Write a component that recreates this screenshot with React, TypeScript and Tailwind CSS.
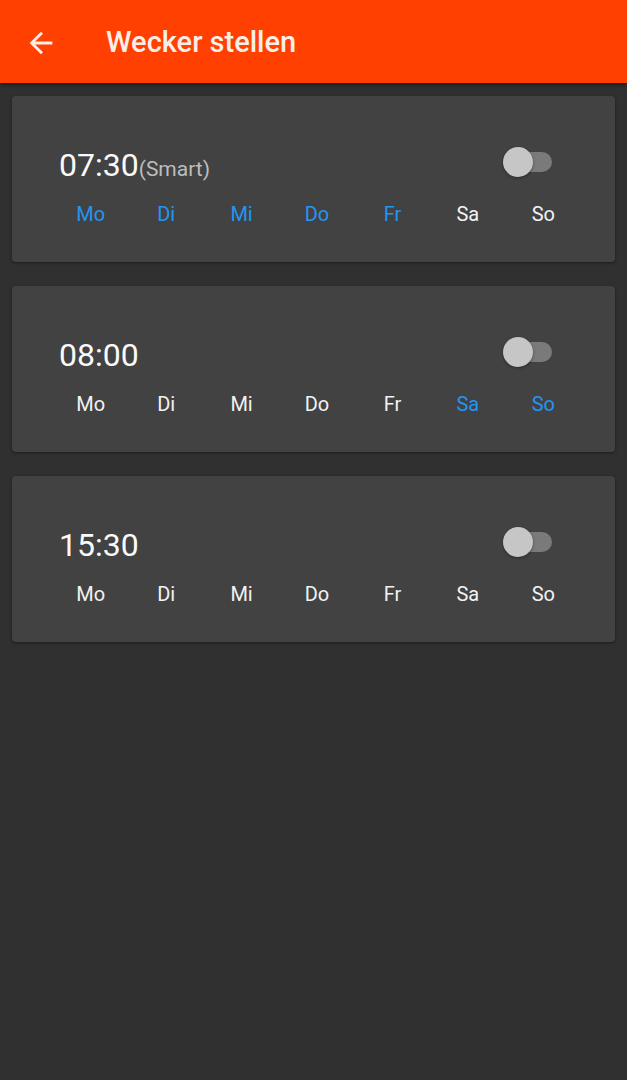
import React from 'react';

interface Alarm {
  time: string;
  smart?: boolean;
  activeDays: string[];
}

const DAYS = ['Mo', 'Di', 'Mi', 'Do', 'Fr', 'Sa', 'So'];

const alarms: Alarm[] = [
  { time: '07:30', smart: true, activeDays: ['Mo', 'Di', 'Mi', 'Do', 'Fr'] },
  { time: '08:00', activeDays: ['Sa', 'So'] },
  { time: '15:30', activeDays: [] },
];

const Toggle: React.FC = () => (
  <div className="relative w-[50px] h-[30px] flex items-center">
    <div className="absolute left-[2px] right-0 h-[20px] rounded-full bg-[#7a7a7a]" />
    <div className="absolute left-[1px] w-[30px] h-[30px] rounded-full bg-[#c6c6c6] shadow-[0_1px_3px_rgba(0,0,0,0.4)]" />
  </div>
);

const AlarmCard: React.FC<{ alarm: Alarm }> = ({ alarm }) => (
  <div className="bg-[#424242] rounded-[4px] shadow-[0_1px_3px_rgba(0,0,0,0.45)] pt-[49px] pb-[34px]">
    <div className="flex items-center justify-between pl-[47px] pr-[63px]">
      <div className="flex items-baseline h-[40px] leading-[40px]">
        <span className="text-[32px] text-[#fafafa]">{alarm.time}</span>
        {alarm.smart && <span className="text-[21px] text-[#bdbdbd]">(Smart)</span>}
      </div>
      <div className="-mt-[6px]">
        <Toggle />
      </div>
    </div>
    <div className="grid grid-cols-7 w-[528px] ml-[41px] mt-[15px]">
      {DAYS.map((day) => (
        <span
          key={day}
          className={`text-center text-[20px] leading-[28px] ${
            alarm.activeDays.includes(day) ? 'text-[#2196f3]' : 'text-[#f2f2f2]'
          }`}
        >
          {day}
        </span>
      ))}
    </div>
  </div>
);

export default function App() {
  return (
    <div className="min-h-[1080px] bg-[#303030] font-['Roboto',sans-serif]">
      <header className="h-[83px] bg-[#ff4000] flex items-center shadow-[0_2px_4px_rgba(0,0,0,0.4)] relative z-10">
        <svg className="ml-[24px] mt-[2px]" width="34" height="34" viewBox="0 0 24 24" fill="#fbeee8">
          <path d="M20 11H7.83l5.59-5.59L12 4l-8 8 8 8 1.41-1.41L7.83 13H20v-2z" />
        </svg>
        <h1 className="ml-[48px] mt-[2px] text-[29px] font-medium text-[#fbeee8]">Wecker stellen</h1>
      </header>
      <div className="flex flex-col gap-[24px] px-[12px] pt-[13px]">
        {alarms.map((alarm) => (
          <AlarmCard key={alarm.time} alarm={alarm} />
        ))}
      </div>
    </div>
  );
}
